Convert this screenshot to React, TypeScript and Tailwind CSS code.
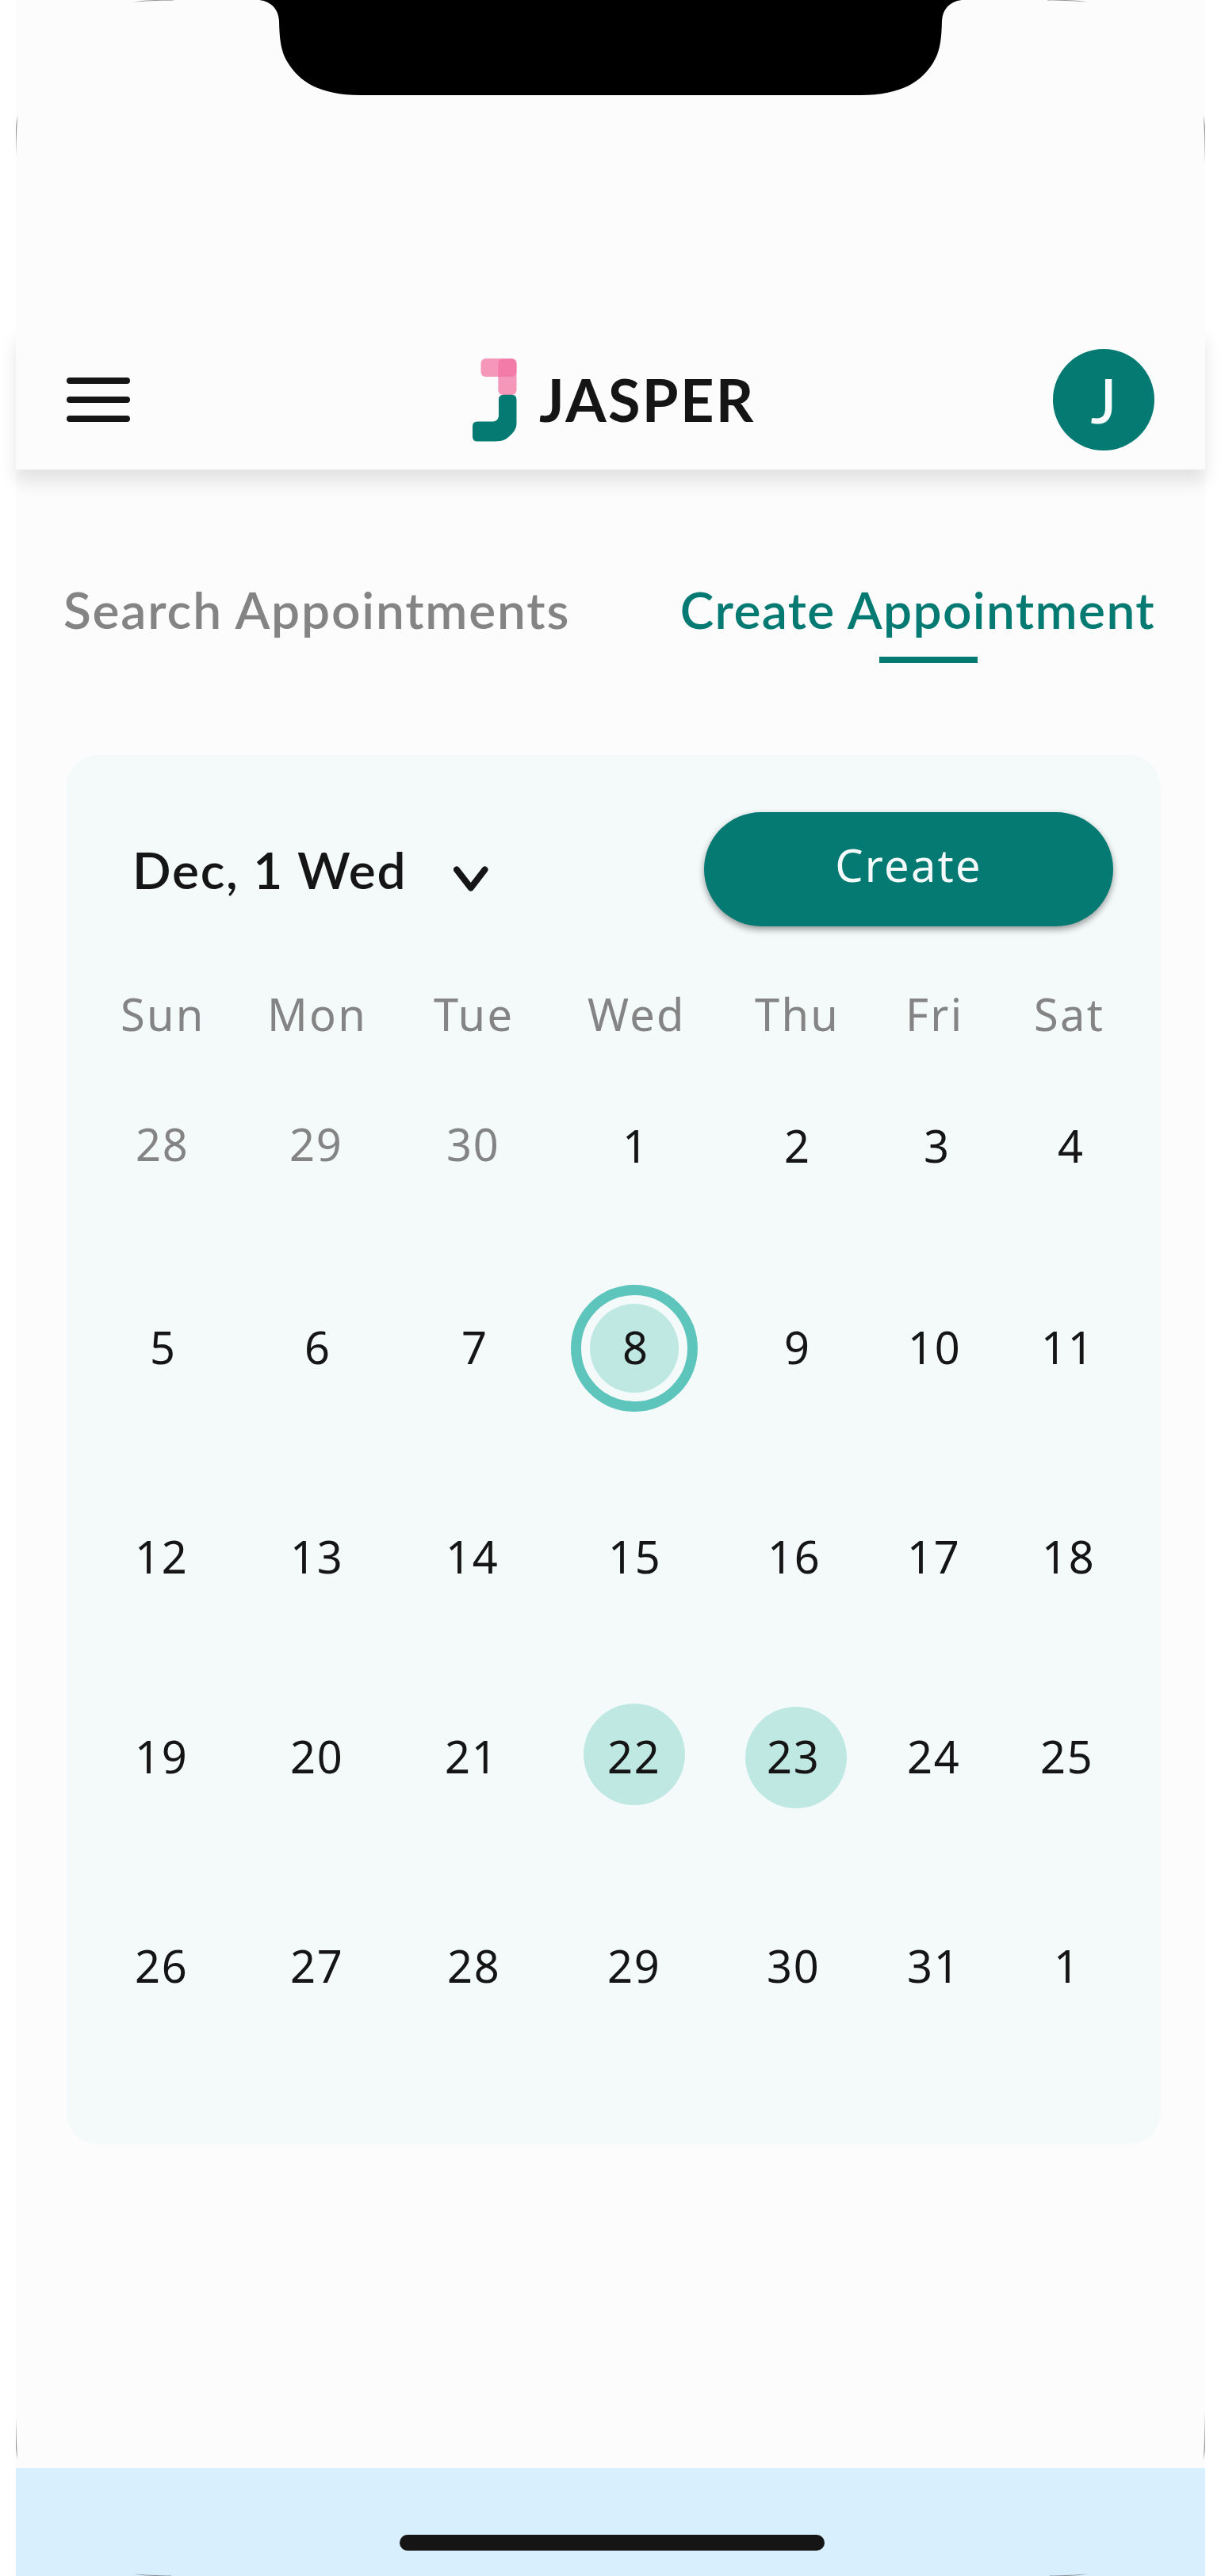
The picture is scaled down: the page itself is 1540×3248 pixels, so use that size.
import React from 'react';

type Mark = 'today' | 'booked' | 'bookedLow';
type Day = { n: string; at: string; muted?: boolean; mark?: Mark };

const columns = 'grid grid-cols-[185px_210px_194px_211px_190px_162px_96px] pl-[68px]';

const weekdays = ['Sun', 'Mon', 'Tue', 'Wed', 'Thu', 'Fri', 'Sat'];

const weeks: { gap: string; days: Day[] }[] = [
  {
    gap: 'mt-[90px]',
    days: [
      { n: '28', at: 'pl-[19px]', muted: true },
      { n: '29', at: 'pl-[28px]', muted: true },
      { n: '30', at: 'pl-[16px]', muted: true },
      { n: '1', at: 'pl-[44px]' },
      { n: '2', at: 'pl-[37px]' },
      { n: '3', at: 'pl-[23px]' },
      { n: '4', at: 'pl-[30px]' },
    ],
  },
  {
    gap: 'mt-[178px]',
    days: [
      { n: '5', at: 'pl-[37px]' },
      { n: '6', at: 'pl-[47px]' },
      { n: '7', at: 'pl-[35px]' },
      { n: '8', at: 'pl-[44px]', mark: 'today' },
      { n: '9', at: 'pl-[37px]' },
      { n: '10', at: 'pl-[3px]' },
      { n: '11', at: 'pl-[9px]' },
    ],
  },
  {
    gap: 'mt-[188px]',
    days: [
      { n: '12', at: 'pl-[18px]' },
      { n: '13', at: 'pl-[29px]' },
      { n: '14', at: 'pl-[15px]' },
      { n: '15', at: 'pl-[26px]' },
      { n: '16', at: 'pl-[16px]' },
      { n: '17', at: 'pl-[2px]' },
      { n: '18', at: 'pl-[10px]' },
    ],
  },
  {
    gap: 'mt-[176px]',
    days: [
      { n: '19', at: 'pl-[18px]' },
      { n: '20', at: 'pl-[29px]' },
      { n: '21', at: 'pl-[14px]' },
      { n: '22', at: 'pl-[25px]', mark: 'booked' },
      { n: '23', at: 'pl-[15px]', mark: 'bookedLow' },
      { n: '24', at: 'pl-[2px]' },
      { n: '25', at: 'pl-[8px]' },
    ],
  },
  {
    gap: 'mt-[188px]',
    days: [
      { n: '26', at: 'pl-[18px]' },
      { n: '27', at: 'pl-[29px]' },
      { n: '28', at: 'pl-[17px]' },
      { n: '29', at: 'pl-[25px]' },
      { n: '30', at: 'pl-[15px]' },
      { n: '31', at: 'pl-[2px]' },
      { n: '1', at: 'pl-[25px]' },
    ],
  },
];

function DayMark({ mark }: { mark: Mark }) {
  if (mark === 'today') {
    return (
      <span className="absolute -top-[40px] -left-[21px] flex size-40 items-center justify-center rounded-full border-[13px] border-[#5ec5bd]">
        <span className="size-28 shrink-0 rounded-full bg-[#bfe8e3]" />
      </span>
    );
  }
  return mark === 'booked' ? (
    <span className="absolute -top-[28px] -left-[5px] size-32 rounded-full bg-[#bfe8e3]" />
  ) : (
    <span className="absolute -top-[24px] -left-[12px] size-32 rounded-full bg-[#bfe8e3]" />
  );
}

function DayCell({ day }: { day: Day }) {
  return (
    <div className={`relative ${day.at}`}>
      {day.mark && <DayMark mark={day.mark} />}
      <span className={day.muted ? 'relative bottom-[2px] text-[#848484]' : 'relative text-[#151515]'}>{day.n}</span>
    </div>
  );
}

function Notch() {
  return (
    <svg className="block h-[120px] w-full" viewBox="20 0 1500 120" fill="#000">
      <path d="M327 0C343 2 351 12 352 26C352.500 52 355 66 363 79C377 102 402 120 455 120H1085C1138 120 1163 102 1177 79C1185 66 1187.500 52 1188 26C1189 12 1197 2 1213 0Z" />
    </svg>
  );
}

function Logo() {
  return (
    <svg className="h-[105px] w-14 shrink-0" viewBox="0 0 56 105">
      <rect x="10.500" y="0" width="45" height="23" rx="6" fill="#f2709f" fillOpacity="0.72" />
      <rect x="32.300" y="0.500" width="23.200" height="45.500" rx="6" fill="#f2709f" fillOpacity="0.72" />
      <path
        d="M33 52Q33 45.700 39 45.700H49.500Q55.500 45.700 55.500 52V82C55.500 89 51 94 46 98.500C40 104 36 104.500 25 104.500H6Q0 104.500 0 98.500V85.500Q0 79.500 6 79.500H24C30 79.500 33 77 33 71Z"
        fill="#047a72"
      />
    </svg>
  );
}

function CornerTicks() {
  return (
    <svg className="pointer-events-none absolute inset-0 h-full w-full" viewBox="0 0 1500 3248" fill="#000" fillOpacity="0.4">
      <path d="M147 2.800C155 1.200 166 0.200 180 0L199 0L199 0.500C180 0.800 160 1.600 147 2.800Z" />
      <path d="M1353 2.800C1345 1.200 1334 0.200 1320 0L1301 0L1301 0.500C1320 0.800 1340 1.600 1353 2.800Z" />
      <path d="M2.400 145C1.500 150 0 156 0 162L0 198C0.700 180 1 160 2.400 145Z" />
      <path d="M1497.600 145C1498.500 150 1500 156 1500 162L1500 206C1499.300 180 1499 160 1497.600 145Z" />
      <path d="M2.400 3102C1.500 3097 0 3091 0 3085L0 3050C0.700 3067 1 3087 2.400 3102Z" />
      <path d="M1497.600 3102C1498.500 3097 1500 3091 1500 3085L1500 3040C1499.300 3067 1499 3087 1497.600 3102Z" />
      <path d="M147 3245.200C155 3246.800 166 3247.800 180 3248L196 3248L196 3247.500C180 3247.200 160 3246.400 147 3245.200Z" />
      <path d="M1353 3245.200C1345 3246.800 1334 3247.800 1320 3248L1304 3248L1304 3247.500C1320 3247.200 1340 3246.400 1353 3245.200Z" />
    </svg>
  );
}

export default function App() {
  return (
    <div className="h-[3248px] w-[1540px] overflow-hidden bg-white px-5 font-['Lato',sans-serif] text-[#151515]">
      <div className="relative flex h-full flex-col bg-[#fcfcfc]">
        <div className="h-[412px]">
          <Notch />
        </div>

        <header className="flex h-[180px] shrink-0 items-center bg-[#fcfcfc] px-16 pt-1 shadow-[0_16px_20px_rgba(0,0,0,0.1)]">
          <button className="flex w-20 flex-col gap-4" aria-label="Menu">
            <span className="h-2 w-full rounded-full bg-[#151515]" />
            <span className="h-2 w-full rounded-full bg-[#151515]" />
            <span className="h-2 w-full rounded-full bg-[#151515]" />
          </button>
          <div className="ml-[432px] flex items-center gap-7">
            <Logo />
            <span className="text-[74px] leading-[88px] font-bold tracking-[2.3px]">JASPER</span>
          </div>
          <div className="ml-auto flex size-32 items-center justify-center rounded-full bg-[#047a72] text-[78px] leading-[92px] font-medium text-[#f7fbfb]">
            J
          </div>
        </header>

        <nav className="flex h-[360px] shrink-0 items-start pt-[139px] pr-[63px] pl-[60px] text-[64px] leading-[75px] font-semibold whitespace-nowrap">
          <a className="tracking-[1.8px] text-[#848484]">Search Appointments</a>
          <a className="ml-auto flex flex-col text-[#047a72]">
            <span className="tracking-[1.35px]">Create Appointment</span>
            <span className="mt-[22px] ml-[251px] h-2 w-[124px] bg-[#047a72]" />
          </a>
        </nav>

        <section className="mr-14 ml-16 flex h-[1752px] shrink-0 flex-col rounded-[40px] bg-[#f4fafa] pt-[72px]">
          <div className="flex h-36 items-start">
            <button className="mt-[35px] ml-[83px] flex items-start">
              <span className="w-[405px] text-left text-[64px] leading-[75px] font-semibold tracking-[1.7px]">Dec, 1 Wed</span>
              <svg className="mt-[33px] h-8 w-11" viewBox="0 0 44 32" fill="none" stroke="#151515" strokeWidth="8" strokeLinecap="round" strokeLinejoin="round">
                <path d="M4 4.500L21.800 27.500L39.500 4.500" />
              </svg>
            </button>
            <button className="mr-[60px] ml-auto flex h-36 w-[516px] items-center justify-center rounded-full bg-[#047a72] pb-3 font-['Noto_Sans',sans-serif] text-[56px] leading-[76px] tracking-[2.24px] text-[#f4fafa] shadow-[0_4px_8px_rgba(0,0,0,0.4)]">
              Create
            </button>
          </div>

          <div className="mt-[72px] font-['Noto_Sans',sans-serif] text-[56px] leading-[76px]">
            <div className={`${columns} tracking-[2.24px] text-[#848484]`}>
              {weekdays.map((d) => (
                <span key={d}>{d}</span>
              ))}
            </div>
            {weeks.map((week, i) => (
              <div key={i} className={`${columns} tracking-[1.7px] ${week.gap}`}>
                {week.days.map((day) => (
                  <DayCell key={day.n} day={day} />
                ))}
              </div>
            ))}
          </div>
        </section>

        <footer className="mt-auto flex h-[136px] shrink-0 items-end justify-center bg-[#d8f0fe] pb-8">
          <span className="ml-1 h-5 w-[536px] rounded-full bg-[#151515]" />
        </footer>

        <CornerTicks />
      </div>
    </div>
  );
}
